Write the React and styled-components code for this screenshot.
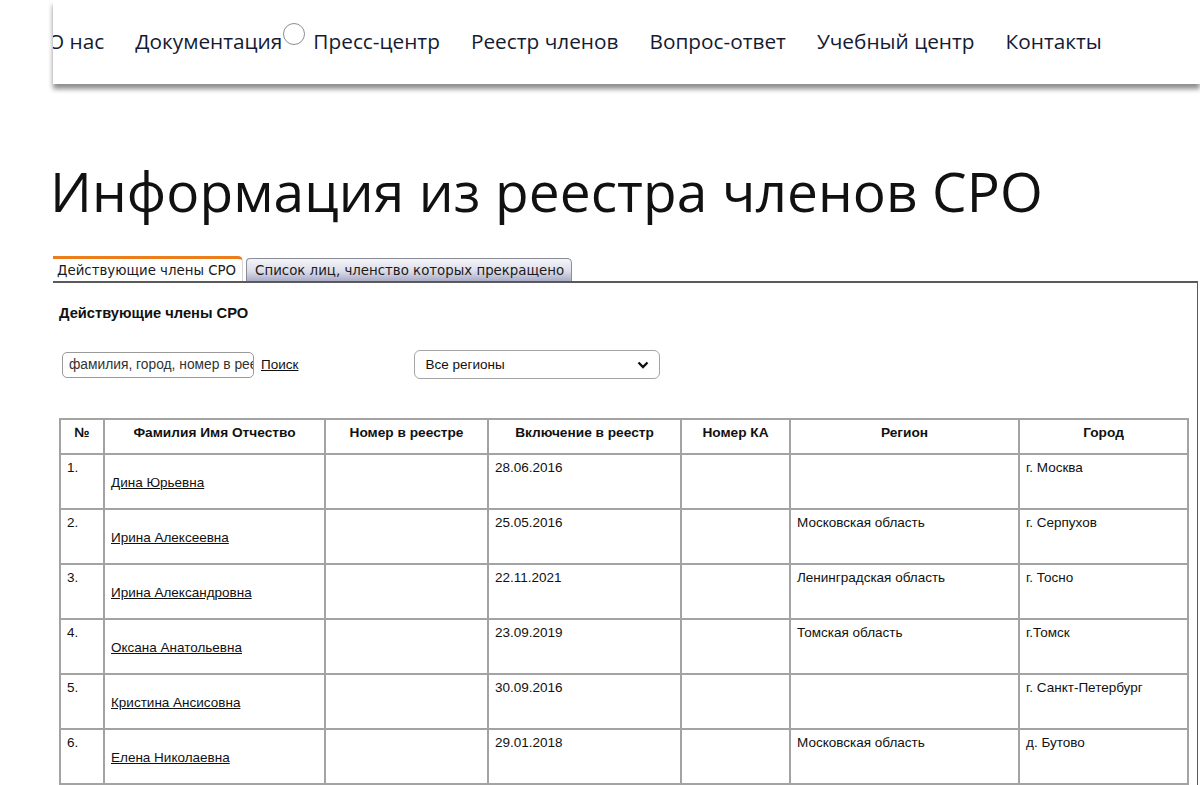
import React from 'react';
import styled, { createGlobalStyle } from 'styled-components';

const GlobalStyle = createGlobalStyle`
    html, body {
        margin: 0;
        padding: 0;
        background: #fff;
        overflow: hidden;
    }
    body {
        font-family: "Liberation Sans", Arial, sans-serif;
        color: #111;
    }
`;

const Page = styled.div`
    width: 1200px;
    height: 785px;
    overflow: hidden;
`;

const Header = styled.header`
    margin-left: 53px;
    height: 84px;
    background: #fff;
    box-shadow: 0 5px 5px rgba(0, 0, 0, 0.45);
    overflow: hidden;
`;

const Menu = styled.ul`
    display: flex;
    align-items: center;
    height: 84px;
    margin: 0 0 0 -5px;
    padding: 0;
    list-style: none;
    gap: 31px;
`;

const MenuItem = styled.li`
    position: relative;
    font-family: "Open Sans", sans-serif;
    font-size: 20.8px;
    color: #141b33;
    white-space: nowrap;
    padding-bottom: 2px;
`;

const Ring = styled.span`
    position: absolute;
    right: -23px;
    top: -4px;
    width: 22px;
    height: 22px;
    border: 1.5px solid #8a8d96;
    border-radius: 50%;
    background: #fff;
    box-sizing: border-box;
`;

const Title = styled.h1`
    margin: 70px 0 0 50px;
    font-family: "Open Sans", sans-serif;
    font-weight: 400;
    font-size: 55px;
    line-height: 74px;
    color: #111;
    letter-spacing: 0.1px;
`;

const Tabs = styled.div`
    display: flex;
    align-items: flex-end;
    gap: 3px;
    margin: 27px 0 0 53px;
    height: 26px;
`;

const Tab = styled.div`
    height: ${p => (p.$active ? '25px' : '23px')};
    padding: 0 ${p => (p.$active ? '6px' : '7px')} 0 ${p => (p.$active ? '4px' : '8px')};
    display: flex;
    align-items: center;
    font-family: "DejaVu Sans", Tahoma, sans-serif;
    font-size: 13.35px;
    color: #1a1a1a;
    border-radius: 0 5px 0 0;
    box-sizing: border-box;
    border-top: ${p => (p.$active ? '3px solid #ec7d1b' : '1px solid #8a8c99')};
    border-right: 1px solid ${p => (p.$active ? '#d6d6d6' : '#8a8c99')};
    border-left: ${p => (p.$active ? 'none' : '1px solid #8a8c99')};
    border-top-left-radius: ${p => (p.$active ? '0' : '4px')};
    background: ${p => (p.$active
        ? '#fff'
        : 'linear-gradient(to bottom, #f4f4f8 0%, #dcdde9 55%, #a9acc6 100%)')};
`;

const Panel = styled.section`
    margin-left: 53px;
    width: 1145px;
    border-top: 2px solid #5a5a5a;
    border-right: 1px solid #5a5a5a;
    box-sizing: border-box;
    padding: 22px 0 0 6px;
    height: 520px;
`;

const PanelTitle = styled.h3`
    margin: 0;
    font-family: "Liberation Sans", Arial, sans-serif;
    font-size: 14.7px;
    font-weight: 700;
    color: #111;
`;

const Filters = styled.div`
    display: flex;
    align-items: center;
    margin-top: 29px;
    padding-left: 3px;
`;

const SearchInput = styled.div`
    width: 192px;
    height: 26px;
    box-sizing: border-box;
    border: 1px solid #9a9a9a;
    border-radius: 5px;
    padding: 0 0 0 6px;
    display: flex;
    align-items: center;
    overflow: hidden;
    white-space: nowrap;
    font-size: 13.8px;
    color: #333;
`;

const SearchLink = styled.a`
    margin-left: 7px;
    font-size: 13.5px;
    color: #111;
    text-decoration: underline;
`;

const Select = styled.div`
    margin-left: 116px;
    width: 246px;
    height: 29px;
    box-sizing: border-box;
    border: 1px solid #a5a5a5;
    border-radius: 6px;
    padding: 0 10px 0 10px;
    display: flex;
    align-items: center;
    justify-content: space-between;
    font-size: 13.5px;
    color: #111;
`;

const Table = styled.table`
    margin-top: 39px;
    border-collapse: collapse;
    table-layout: fixed;
    width: 1128px;
    font-family: "Liberation Sans", Arial, sans-serif;
    font-size: 13.5px;
    color: #111;
`;

const Th = styled.th`
    height: 35px;
    border: 2px solid #a3a3a3;
    font-size: 13.7px;
    font-weight: 700;
    text-align: center;
    vertical-align: top;
    padding: 5px 4px 0;
    box-sizing: border-box;
`;

const Td = styled.td`
    height: 55px;
    border: 2px solid #a3a3a3;
    vertical-align: top;
    padding: 5px 6px 0;
    box-sizing: border-box;
`;

const NameLink = styled.a`
    display: inline-block;
    margin-top: 15px;
    color: #111;
    text-decoration: underline;
`;

const columns = [
    { title: '№', width: 44 },
    { title: 'Фамилия Имя Отчество', width: 221 },
    { title: 'Номер в реестре', width: 163 },
    { title: 'Включение в реестр', width: 193 },
    { title: 'Номер КА', width: 109 },
    { title: 'Регион', width: 229 },
    { title: 'Город', width: 169 },
];

const members = [
    { name: 'Дина Юрьевна', date: '28.06.2016', region: '', city: 'г. Москва' },
    { name: 'Ирина Алексеевна', date: '25.05.2016', region: 'Московская область', city: 'г. Серпухов' },
    { name: 'Ирина Александровна', date: '22.11.2021', region: 'Ленинградская область', city: 'г. Тосно' },
    { name: 'Оксана Анатольевна', date: '23.09.2019', region: 'Томская область', city: 'г.Томск' },
    { name: 'Кристина Ансисовна', date: '30.09.2016', region: '', city: 'г. Санкт-Петербург' },
    { name: 'Елена Николаевна', date: '29.01.2018', region: 'Московская область', city: 'д. Бутово' },
];

const menu = ['О нас', 'Документация', 'Пресс-центр', 'Реестр членов', 'Вопрос-ответ', 'Учебный центр', 'Контакты'];

const Chevron = () => (
    <svg width="12" height="8" viewBox="0 0 12 8">
        <path d="M1.5 1.5 L6 6 L10.5 1.5" fill="none" stroke="#111" strokeWidth="2.4" />
    </svg>
);

export default function App() {
    return (
        <Page>
            <GlobalStyle />
            <Header>
                <Menu>
                    {menu.map(item => (
                        <MenuItem key={item}>
                            {item}
                            {item === 'Документация' && <Ring />}
                        </MenuItem>
                    ))}
                </Menu>
            </Header>

            <Title>Информация из реестра членов СРО</Title>

            <Tabs>
                <Tab $active>Действующие члены СРО</Tab>
                <Tab>Список лиц, членство которых прекращено</Tab>
            </Tabs>

            <Panel>
                <PanelTitle>Действующие члены СРО</PanelTitle>
                <Filters>
                    <SearchInput>фамилия, город, номер в реестре</SearchInput>
                    <SearchLink href="#">Поиск</SearchLink>
                    <Select>
                        <span>Все регионы</span>
                        <Chevron />
                    </Select>
                </Filters>

                <Table>
                    <colgroup>
                        {columns.map(c => <col key={c.title} style={{ width: c.width }} />)}
                    </colgroup>
                    <thead>
                        <tr>
                            {columns.map(c => <Th key={c.title}>{c.title}</Th>)}
                        </tr>
                    </thead>
                    <tbody>
                        {members.map((m, i) => (
                            <tr key={m.name}>
                                <Td>{i + 1}.</Td>
                                <Td><NameLink href="#">{m.name}</NameLink></Td>
                                <Td />
                                <Td>{m.date}</Td>
                                <Td />
                                <Td>{m.region}</Td>
                                <Td>{m.city}</Td>
                            </tr>
                        ))}
                    </tbody>
                </Table>
            </Panel>
        </Page>
    );
}
